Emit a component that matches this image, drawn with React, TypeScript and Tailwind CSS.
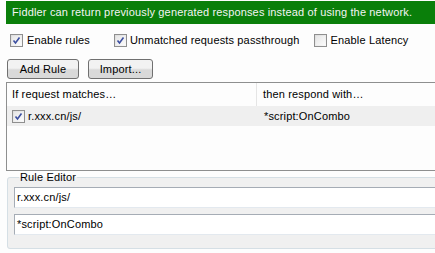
import React from 'react';

function Check({ checked }: { checked: boolean }) {
  return (
    <span className="inline-flex w-[13px] h-[13px] shrink-0 items-center justify-center border border-[#8f8f8f] bg-gradient-to-br from-[#dcdcdc] to-[#fafafa]">
      <span className="w-[9px] h-[9px] flex items-center justify-center bg-gradient-to-br from-[#e6e6e6] to-[#fbfbfb]">
        {checked && (
          <svg width="9" height="9" viewBox="0 0 9 9">
            <path d="M1.5 4.5 L3.5 7 L7.5 1.5" fill="none" stroke="#3c4fa0" strokeWidth="1.6" />
          </svg>
        )}
      </span>
    </span>
  );
}

function Btn({ label, w }: { label: string; w: string }) {
  return (
    <button className={`${w} h-[20px] rounded-[3px] border border-[#707070] bg-gradient-to-b from-[#f2f2f2] from-45% to-[#d9d9d9] to-55% text-[11px] leading-none text-black`}>
      {label}
    </button>
  );
}

export default function App() {
  return (
    <div className="w-[435px] h-[253px] overflow-hidden bg-[#fdfdfd] text-[11px] tracking-[0.15px] text-black font-['Liberation_Sans',Arial,sans-serif]">
      {/* Banner */}
      <div className="ml-[6px] mt-[1px] h-[23px] bg-[#0a7f0a] text-[#f4f4f4] flex items-center pl-[6px] whitespace-nowrap">
        Fiddler can return previously generated responses instead of using the network.
      </div>

      {/* Options */}
      <div className="flex items-center h-[14px] mt-[9px] whitespace-nowrap">
        <div className="flex items-center gap-[4px] ml-[10px]">
          <Check checked />
          <span>Enable rules</span>
        </div>
        <div className="flex items-center gap-[3px] ml-[24px]">
          <Check checked />
          <span>Unmatched requests passthrough</span>
        </div>
        <div className="flex items-center gap-[4px] ml-[14px]">
          <Check checked={false} />
          <span>Enable Latency</span>
        </div>
      </div>

      {/* Buttons */}
      <div className="flex gap-[9px] ml-[7px] mt-[12px]">
        <Btn label="Add Rule" w="w-[72px]" />
        <Btn label="Import..." w="w-[65px]" />
      </div>

      {/* Rules list */}
      <div className="ml-[6px] mt-[3px] h-[89px] border-t border-l border-b border-[#8e8f8f] bg-[#fdfdfd] whitespace-nowrap">
        <div className="flex h-[23px] items-center">
          <div className="w-[250px] h-full flex items-center pl-[5px] border-r border-[#e5e5e5]">If request matches…</div>
          <div className="pl-[6px]">then respond with…</div>
        </div>
        <div className="flex h-[20px] items-center bg-[#efefef]">
          <div className="w-[251px] flex items-center gap-[3px] pl-[5px]">
            <Check checked />
            <span>r.xxx.cn/js/</span>
          </div>
          <div className="pl-[6px]">*script:OnCombo</div>
        </div>
      </div>

      {/* Rule editor */}
      <fieldset className="ml-[7px] -mr-[4px] h-[78px] border border-[#d5dfe5] rounded-[3px] bg-[#f0f0f0] pl-[6px]">
        <legend className="ml-[5px] px-[1px] leading-[13px]">Rule Editor</legend>
        <div className="flex flex-col gap-[6px] mt-[3px]">
          <div className="h-[21px] border border-[#a5acb5] border-b-[#e3e9ef] bg-white flex items-center pl-[2px]">r.xxx.cn/js/</div>
          <div className="h-[21px] border border-[#a5acb5] border-b-[#e3e9ef] bg-white flex items-center pl-[2px]">*script:OnCombo</div>
        </div>
      </fieldset>
    </div>
  );
}
